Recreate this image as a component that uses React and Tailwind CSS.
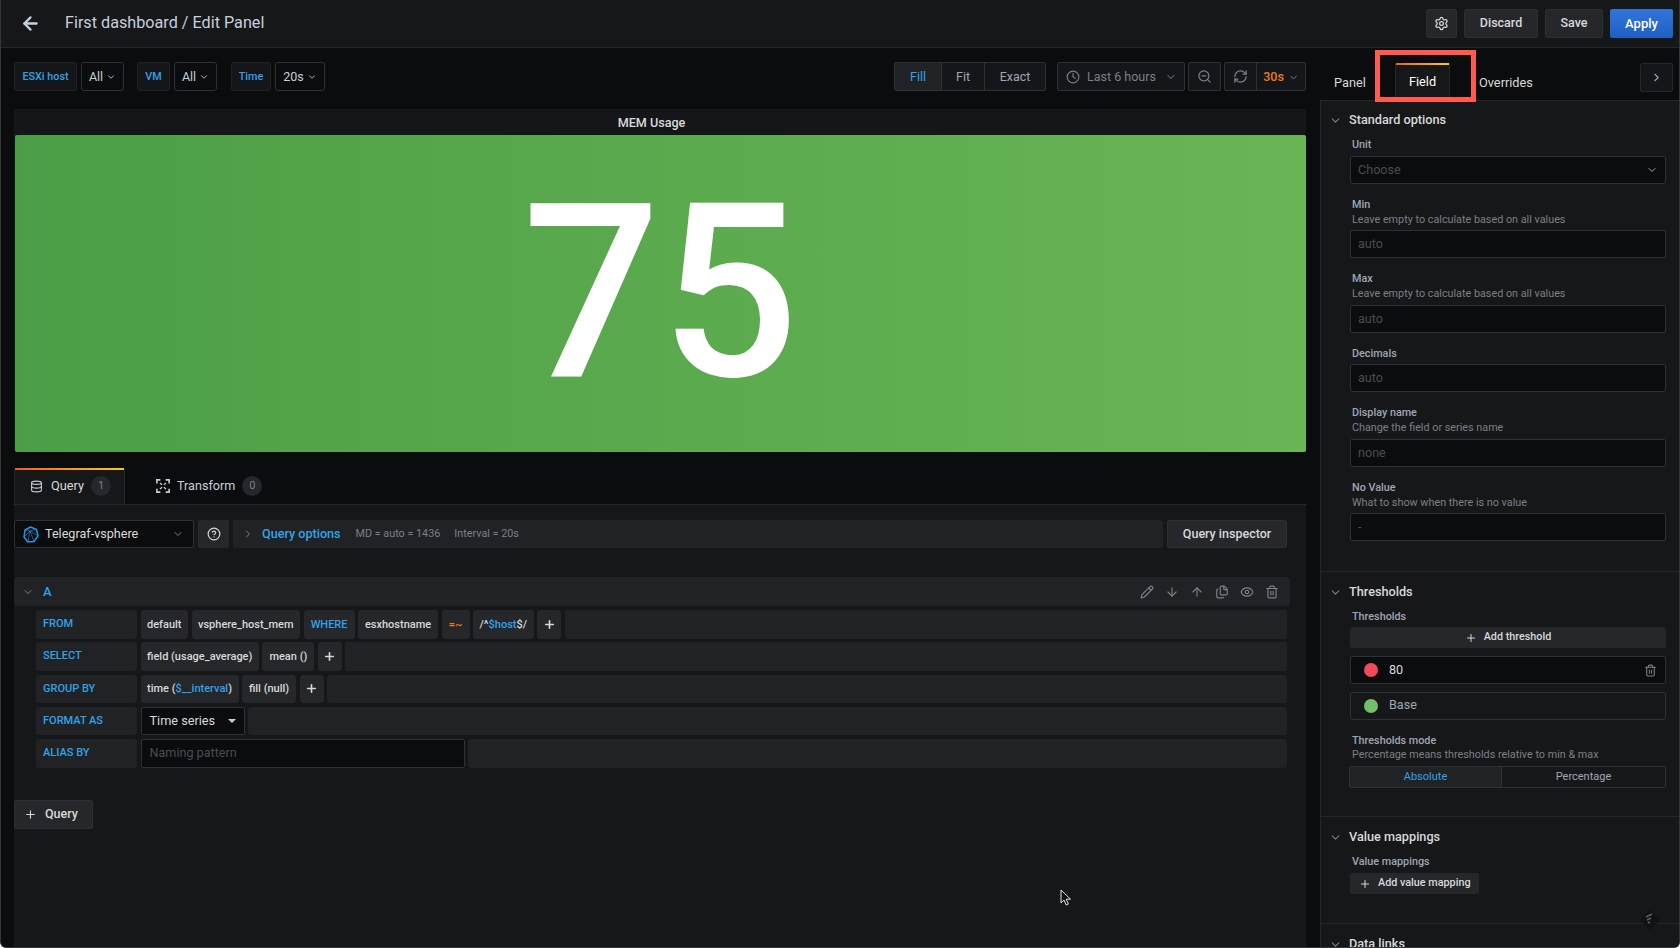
import {
  ArrowDown,
  ArrowLeft,
  ArrowUp,
  ChevronDown,
  ChevronRight,
  CircleHelp,
  Clock,
  Database,
  Eye,
  Files,
  Pencil,
  Plus,
  RefreshCw,
  Settings,
  Trash2,
  ZoomOut,
} from "lucide-react";

// small pieces used by the query editor
function Pill({ children, color = "text-[#d8d9da]", className = "" }) {
  return (
    <div className={`h-full px-[6.5px] flex items-center justify-center bg-[#25272b] rounded-[3px] font-medium text-[11px] pt-[1px] whitespace-nowrap ${color} ${className}`}>
      {children}
    </div>
  );
}

function RowLabel({ children }) {
  return (
    <div className="w-[101px] h-full pl-[7px] flex items-center bg-[#202226] rounded-[3px] text-[#33a2e5] font-medium text-[11px] shrink-0">
      {children}
    </div>
  );
}

function Filler() {
  return <div className="flex-1 h-full bg-[#202226] rounded-[3px]" />;
}

function AddPill() {
  return (
    <div className="h-full w-[24px] flex items-center justify-center bg-[#25272b] rounded-[3px] text-[#d8d9da]">
      <Plus size={13} strokeWidth={3} />
    </div>
  );
}

function QueryRow({ label, children }) {
  return (
    <div className="h-[28.5px] flex gap-[3.5px]">
      <RowLabel>{label}</RowLabel>
      {children}
      <Filler />
    </div>
  );
}

function VarLabel({ children, className = "" }) {
  return (
    <div className={`h-[29px] pt-[1px] flex items-center justify-center bg-[#141619] border border-[#202226] rounded-[3px] text-[#33a2e5] font-medium text-[10.8px] ${className}`}>
      {children}
    </div>
  );
}

function VarSelect({ children, className = "" }) {
  return (
    <div className={`h-[29px] flex items-center justify-center gap-[3px] bg-[#0b0c0e] border border-[#2c3235] rounded-[3px] text-[#c7d0d9] text-[12.5px] ${className}`}>
      <span className="pt-[1px]">{children}</span>
      <ChevronDown size={10} />
    </div>
  );
}

function TopButton({ children, className = "" }) {
  return (
    <div className={`h-[29px] flex items-center justify-center bg-[#25272b] border border-[#2c2e33] rounded-[2px] text-[#d8d9da] font-medium text-[12.5px] ${className}`}>
      {children}
    </div>
  );
}

function Field({ label, desc, value }) {
  return (
    <div className="pb-[13px]">
      <div className="text-[10.8px] leading-[15px] font-medium text-[#9fa7b3] pl-[2px]">{label}</div>
      {desc && <div className="text-[10.8px] leading-[15px] text-[#7b8087] pl-[2px]">{desc}</div>}
      <div className="mt-[3.5px] h-[28px] px-[7px] pt-[1px] flex items-center bg-[#0b0c0e] border border-[#2c3235] rounded-[2px] text-[12.6px] text-[#464c54]">
        {value}
      </div>
    </div>
  );
}

function SectionTitle({ children }) {
  return (
    <div className="h-[20px] flex items-center">
      <ChevronDown size={13} className="ml-[8px] text-[#7b8087]" />
      <span className="ml-[7px] text-[12.7px] font-medium text-[#d8d9da]">{children}</span>
    </div>
  );
}

function TransformIcon() {
  return (
    <svg width="14" height="14" viewBox="0 0 16 16" fill="none" stroke="#c7d0d9" strokeWidth="1.8">
      <path d="M1 5V1h4M11 1h4v4M15 11v4h-4M5 15H1v-4" />
      <path d="M4.5 4.5l2.5 2M11.5 4.5L9 6.5M11.5 11.5L9 9.5M4.5 11.5l2.5-2" strokeWidth="1.4" />
    </svg>
  );
}

function TelegrafIcon() {
  return (
    <svg width="16" height="17" viewBox="0 0 16 17" fill="none" stroke="#2f8fe0" strokeWidth="1.5" strokeLinejoin="round">
      <path d="M7.5 1l6 2.5L15 10l-4 5.5-6 .5L1 11l1-7z" />
      <path d="M2 4l5 1 6.5-1.500M7 5L5 16M7 5l4 10.500M1 11l6-6M7 5l8 5" strokeWidth="0.6" />
    </svg>
  );
}

function MouseCursor() {
  return (
    <svg className="absolute left-[1059px] top-[889px]" width="12" height="18" viewBox="0 0 12 18" fill="#111" stroke="#e5e5e5" strokeWidth="1">
      <path d="M1 1v13l3-3 2.2 5 2.2-1-2.2-4.8H10.500z" />
    </svg>
  );
}

export default function App() {
  return (
    <div className="relative w-[1680px] h-[948px] overflow-hidden flex flex-col bg-[#0b0c0e] border-x border-b border-[#34363a] rounded-b-[6px] font-['Roboto',sans-serif]">
      {/* top bar */}
      <div className="h-[48px] shrink-0 flex items-center bg-[#161719] border-b border-[#25272b]">
        <ArrowLeft size={21} strokeWidth={2.6} className="ml-[19px] text-[#c7d0d9]" />
        <span className="ml-[24px] text-[#c7d0d9] text-[16.2px]">First dashboard / Edit Panel</span>
        <div className="ml-auto flex gap-[7px] mr-[6px]">
          <TopButton className="w-[31px]"><Settings size={15} /></TopButton>
          <TopButton className="w-[74px]">Discard</TopButton>
          <TopButton className="w-[58px]">Save</TopButton>
          <div className="w-[63px] h-[29px] flex items-center justify-center rounded-[2px] bg-linear-to-b from-[#3274d9] to-[#1f60c4] text-white font-medium text-[13px]">
            Apply
          </div>
        </div>
      </div>

      <div className="flex-1 flex min-h-0">
        {/* left column */}
        <div className="w-[1319px] shrink-0 flex flex-col pl-[13px] pr-[14px]">
          <div className="mt-[14px] flex">
            <VarLabel className="w-[63px]">ESXi host</VarLabel>
            <VarSelect className="w-[43px] ml-[4px]">All</VarSelect>
            <VarLabel className="w-[33px] ml-[13px]">VM</VarLabel>
            <VarSelect className="w-[43px] ml-[4px]">All</VarSelect>
            <VarLabel className="w-[40px] ml-[14px]">Time</VarLabel>
            <VarSelect className="w-[50px] ml-[4px]">20s</VarSelect>

            <div className="ml-auto flex text-[12.5px]">
              <div className="flex h-[29px] w-[152px] border border-[#2c3235] rounded-[2px] bg-[#141619] text-[#9fa7b3]">
                <div className="w-[47px] pt-[1px] flex items-center justify-center bg-[#202226] text-[#33a2e5] border-r border-[#2c3235]">Fill</div>
                <div className="w-[43px] pt-[1px] flex items-center justify-center border-r border-[#2c3235]">Fit</div>
                <div className="flex-1 pt-[1px] flex items-center justify-center">Exact</div>
              </div>
              <div className="ml-[11px] w-[128px] h-[29px] flex items-center pl-[8px] border border-[#2c3235] rounded-[2px] bg-[#141619] text-[#7b8087]">
                <Clock size={14} />
                <span className="ml-[7px] pt-[1px]">Last 6 hours</span>
                <ChevronDown size={12} className="ml-auto mr-[7px]" />
              </div>
              <div className="ml-[3px] w-[33px] h-[29px] flex items-center justify-center border border-[#2c3235] rounded-[2px] bg-[#141619] text-[#7b8087]">
                <ZoomOut size={15} />
              </div>
              <div className="ml-[3px] w-[82px] h-[29px] flex border border-[#2c3235] rounded-[2px] bg-[#141619]">
                <div className="w-[32px] flex items-center justify-center border-r border-[#2c3235] text-[#7b8087]">
                  <RefreshCw size={15} />
                </div>
                <div className="flex-1 pt-[1px] flex items-center justify-center gap-[4px] text-[#eb7b18] font-medium">
                  30s
                  <ChevronDown size={11} className="text-[#7b8087]" />
                </div>
              </div>
            </div>
          </div>

          {/* stat panel */}
          <div className="mt-[18px] h-[343px] shrink-0 flex flex-col bg-[#141619] rounded-t-[3px]">
            <div className="h-[26px] pt-[2px] pr-[17px] flex items-center justify-center text-[#d8d9da] font-medium text-[12.6px]">MEM Usage</div>
            <div className="flex-1 ml-[1px] flex items-center justify-center bg-linear-to-r from-[#4b9e47] to-[#6ab555] text-white font-medium text-[243px] leading-none rounded-[2px]">
              75
            </div>
          </div>

          {/* query tabs */}
          <div className="mt-[16px] h-[36px] shrink-0 flex items-stretch">
            <div className="w-[111px] relative flex items-center bg-[#161719] border-x border-[#25272b] rounded-t-[3px]">
              <div className="absolute inset-x-0 top-0 h-[2px] bg-linear-to-r from-[#f05a28] to-[#fbca0a]" />
              <Database size={13} className="ml-[15px] text-[#c7d0d9]" />
              <span className="ml-[8px] text-[12.75px] text-[#d8d9da]">Query</span>
              <span className="ml-[7px] w-[20px] h-[20px] flex items-center justify-center rounded-full bg-[#25272b] text-[#7b8087] text-[11px]">1</span>
            </div>
            <div className="flex items-center ml-[31px]">
              <TransformIcon />
              <span className="ml-[7px] text-[12.6px] text-[#c7d0d9]">Transform</span>
              <span className="ml-[7px] w-[20px] h-[20px] flex items-center justify-center rounded-full bg-[#25272b] text-[#7b8087] text-[11px]">0</span>
            </div>
          </div>

          {/* query editor */}
          <div className="flex-1 bg-[#161719] border-t border-[#25272b]">
            <div className="mt-[15px] w-[1273px] h-[28px] flex gap-[4px]">
              <div className="w-[180px] flex items-center bg-[#0b0c0e] border border-[#2c3235] rounded-[2px] text-[12.6px] text-[#d8d9da]">
                <span className="ml-[8px] flex"><TelegrafIcon /></span>
                <span className="ml-[6px]">Telegraf-vsphere</span>
                <ChevronDown size={12} className="ml-auto mr-[9px] text-[#7b8087]" />
              </div>
              <div className="w-[31px] flex items-center justify-center bg-[#25272b] rounded-[2px] text-[#d8d9da]">
                <CircleHelp size={14} />
              </div>
              <div className="flex-1 flex items-center bg-[#202226] rounded-[2px] text-[10.8px] text-[#7b8087]">
                <ChevronRight size={12} className="ml-[9px]" />
                <span className="ml-[8px] text-[12.6px] font-medium text-[#33a2e5]">Query options</span>
                <span className="ml-[15px]">MD = auto = 1436</span>
                <span className="ml-[14px]">Interval = 20s</span>
              </div>
              <div className="w-[120px] flex items-center justify-center bg-[#25272b] border border-[#2c2e33] rounded-[2px] text-[12.5px] font-medium text-[#d8d9da]">
                Query inspector
              </div>
            </div>

            <div className="mt-[29px] w-[1276px] h-[29px] flex items-center bg-[#202226] rounded-[3px] text-[#7b8087]">
              <ChevronDown size={12} className="ml-[8px]" />
              <span className="ml-[9px] text-[13px] font-medium text-[#33a2e5]">A</span>
              <div className="ml-auto mr-[11px] flex items-center gap-[11px]">
                <Pencil size={14} />
                <ArrowDown size={14} />
                <ArrowUp size={14} />
                <Files size={14} />
                <Eye size={14} />
                <Trash2 size={14} />
              </div>
            </div>

            <div className="mt-[4px] ml-[22px] w-[1251px] flex flex-col gap-[3.75px]">
              <QueryRow label="FROM">
                <Pill>default</Pill>
                <Pill>vsphere_host_mem</Pill>
                <Pill color="text-[#33a2e5]" className="w-[51px]">WHERE</Pill>
                <Pill className="w-[80px]">esxhostname</Pill>
                <Pill color="text-[#eb7b18]" className="w-[28px]">=~</Pill>
                <Pill>
                  /^<span className="text-[#33a2e5]">$host</span>$/
                </Pill>
                <AddPill />
              </QueryRow>
              <QueryRow label="SELECT">
                <Pill>field (usage_average)</Pill>
                <Pill className="w-[52px]">mean ()</Pill>
                <AddPill />
              </QueryRow>
              <QueryRow label="GROUP BY">
                <Pill>
                  time (<span className="text-[#33a2e5]">$__interval</span>)
                </Pill>
                <Pill className="w-[54px]">fill (null)</Pill>
                <AddPill />
              </QueryRow>
              <QueryRow label="FORMAT AS">
                <div className="w-[104px] h-full flex items-center pl-[8px] bg-[#0b0c0e] border border-[#2c3235] rounded-[2px] text-[12.7px] text-[#d8d9da]">
                  Time series
                  <span className="ml-auto mr-[8px] w-0 h-0 border-x-[4px] border-x-transparent border-t-[4px] border-t-[#c7d0d9]" />
                </div>
              </QueryRow>
              <QueryRow label="ALIAS BY">
                <div className="w-[324px] h-full flex items-center pl-[8px] pt-[1px] bg-[#0b0c0e] border border-[#2c3235] rounded-[2px] text-[12.6px] text-[#464c54]">
                  Naming pattern
                </div>
              </QueryRow>
            </div>

            <div className="mt-[32px] w-[79px] h-[29px] flex items-center bg-[#25272b] border border-[#2c2e33] rounded-[2px] text-[12.5px] font-medium text-[#d8d9da]">
              <Plus size={13} className="ml-[9px]" />
              <span className="ml-[8px]">Query</span>
            </div>
          </div>
        </div>

        {/* options pane */}
        <div className="flex-1 flex flex-col min-w-0">
          <div className="h-[52px] shrink-0 flex items-end text-[12.75px] text-[#d8d9da]">
            <span className="ml-[14px] mb-[8px] w-[32px]">Panel</span>
            <div className="ml-[29px] w-[55px] h-[37px] relative flex items-center justify-center bg-[#161719] border-x border-[#25272b] text-white">
              <div className="absolute inset-x-0 top-0 h-[2px] bg-linear-to-r from-[#f05a28] to-[#fbca0a]" />
              Field
            </div>
            <span className="ml-[29px] mb-[8px]">Overrides</span>
            <div className="ml-auto mr-[6px] mb-[8px] w-[33px] h-[29px] flex items-center justify-center bg-[#141619] border border-[#25272b] rounded-[2px] text-[#9fa7b3]">
              <ChevronRight size={13} />
            </div>
          </div>

          <div className="flex-1 bg-[#161719] border-l border-t border-[#25272b] pt-[9px]">
            <SectionTitle>Standard options</SectionTitle>
            <div className="mt-[7px] pl-[29px] pr-[13px]">
              <div className="pb-[13px]">
                <div className="text-[10.8px] leading-[15px] font-medium text-[#9fa7b3] pl-[2px]">Unit</div>
                <div className="mt-[3.5px] h-[28px] px-[7px] pt-[1px] flex items-center justify-between bg-[#0b0c0e] border border-[#2c3235] rounded-[2px] text-[12.6px] text-[#464c54]">
                  Choose
                  <ChevronDown size={12} className="text-[#9fa7b3]" />
                </div>
              </div>
              <Field label="Min" desc="Leave empty to calculate based on all values" value="auto" />
              <Field label="Max" desc="Leave empty to calculate based on all values" value="auto" />
              <Field label="Decimals" value="auto" />
              <Field label="Display name" desc="Change the field or series name" value="none" />
              <Field label="No Value" desc="What to show when there is no value" value="-" />
            </div>

            <div className="mt-[17px] border-t border-[#25272b] pt-[10px]">
              <SectionTitle>Thresholds</SectionTitle>
              <div className="mt-[7px] pl-[29px] pr-[13px]">
                <div className="text-[10.8px] leading-[15px] font-medium text-[#9fa7b3] pl-[2px]">Thresholds</div>
                <div className="mt-[3px] h-[21px] flex items-center justify-center bg-[#25272b] rounded-[2px] text-[10.8px] font-medium text-[#d8d9da]">
                  <Plus size={12} />
                  <span className="ml-[7px]">Add threshold</span>
                </div>
                <div className="mt-[8px] h-[28px] flex items-center bg-[#0b0c0e] border border-[#2c3235] rounded-[2px] text-[12.6px] text-[#d8d9da]">
                  <span className="ml-[13px] w-[14px] h-[14px] rounded-full bg-[#f2495c]" />
                  <span className="ml-[11px]">80</span>
                  <Trash2 size={13} className="ml-auto mr-[8px] text-[#7b8087]" />
                </div>
                <div className="mt-[7.5px] h-[28.5px] flex items-center border border-[#2c3235] rounded-[2px] text-[12.6px] text-[#9fa7b3]">
                  <span className="ml-[13px] w-[14px] h-[14px] rounded-full bg-[#73bf69]" />
                  <span className="ml-[11px]">Base</span>
                </div>
                <div className="mt-[13.5px] text-[10.8px] leading-[14px] font-medium text-[#9fa7b3] pl-[2px]">Thresholds mode</div>
                <div className="text-[10.8px] leading-[14px] text-[#7b8087] pl-[2px]">Percentage means thresholds relative to min &amp; max</div>
                <div className="mt-[4.5px] ml-[-1px] h-[22px] flex border border-[#2c3235] rounded-[2px] text-[11px]">
                  <div className="w-[152px] flex items-center justify-center bg-[#202226] text-[#33a2e5] border-r border-[#2c3235]">Absolute</div>
                  <div className="flex-1 flex items-center justify-center text-[#9fa7b3]">Percentage</div>
                </div>
              </div>
            </div>

            <div className="mt-[28px] border-t border-[#25272b] pt-[10px]">
              <SectionTitle>Value mappings</SectionTitle>
              <div className="mt-[7px] pl-[29px] pr-[13px]">
                <div className="text-[10.8px] leading-[15px] font-medium text-[#9fa7b3] pl-[2px]">Value mappings</div>
                <div className="mt-[4px] w-[129px] h-[21px] flex items-center bg-[#25272b] rounded-[2px] text-[10.8px] font-medium text-[#d8d9da] whitespace-nowrap">
                  <Plus size={12} className="ml-[9px]" />
                  <span className="ml-[7px]">Add value mapping</span>
                </div>
              </div>
            </div>

            <div className="mt-[29px] border-t border-[#25272b] pt-[10px]">
              <SectionTitle>Data links</SectionTitle>
            </div>
          </div>
        </div>
      </div>

      {/* annotation drawn over the tabs */}
      <div className="absolute left-[1374px] top-[50px] w-[101px] h-[52px] border-[5px] border-[#ff5a4d]" />
      <svg className="absolute left-[1638px] top-[909px]" width="22" height="22" viewBox="0 0 22 22" fill="none">
        <path d="M11 1l10 10-10 10L1 11z" fill="#111214" />
        <path d="M7 8l6-3M8 11l4-2M9 14l2-1" stroke="#5a5d62" strokeWidth="1.6" />
      </svg>
      <MouseCursor />
    </div>
  );
}
